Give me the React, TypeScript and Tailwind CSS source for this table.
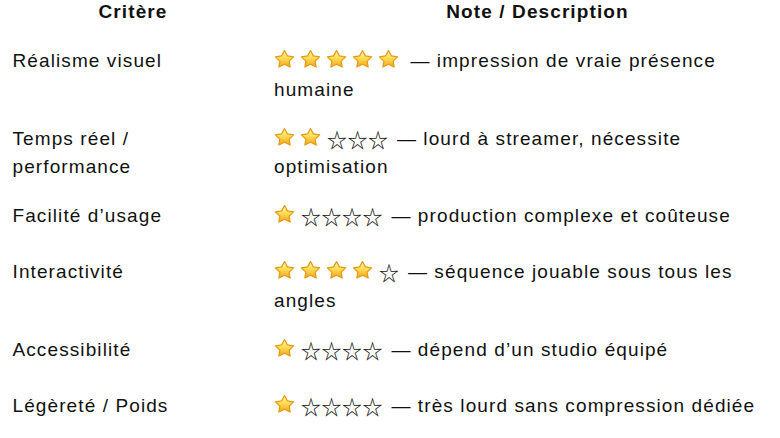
import React from "react";

type Row = { label: string; gold: number; empty: number; text: string };

const rows: Row[] = [
  { label: "Réalisme visuel", gold: 5, empty: 0, text: "— impression de vraie présence humaine" },
  { label: "Temps réel / performance", gold: 2, empty: 3, text: "— lourd à streamer, nécessite optimisation" },
  { label: "Facilité d’usage", gold: 1, empty: 4, text: "— production complexe et coûteuse" },
  { label: "Interactivité", gold: 4, empty: 1, text: "— séquence jouable sous tous les angles" },
  { label: "Accessibilité", gold: 1, empty: 4, text: "— dépend d’un studio équipé" },
  { label: "Légèreté / Poids", gold: 1, empty: 4, text: "— très lourd sans compression dédiée" },
];

function GoldStar({ id }: { id: string }) {
  return (
    <span className="inline-block w-[26px] h-[20px] align-[-2px] tracking-normal">
      <svg width="21" height="20" viewBox="0 0 24 24" preserveAspectRatio="none" className="block">
        <defs>
          <linearGradient id={id} x1="0" y1="0" x2="0" y2="1">
            <stop offset="0" stopColor="#FFF6B0" />
            <stop offset="0.45" stopColor="#FFDD55" />
            <stop offset="1" stopColor="#F4A21C" />
          </linearGradient>
        </defs>
        <path
          d="M12 1.9 L15.29 8.27 L22.46 9.4 L17.33 14.53 L18.47 21.7 L12 18.4 L5.53 21.7 L6.67 14.53 L1.54 9.4 L8.71 8.27 Z"
          fill={`url(#${id})`}
          stroke="#E49B14"
          strokeWidth="1.4"
          strokeLinejoin="round"
        />
      </svg>
    </span>
  );
}

function EmptyStars({ n }: { n: number }) {
  if (n === 0) return null;
  return (
    <span className="inline-block h-[20px] ml-[1px] mr-[2px] text-[20px] leading-[20px] align-[-3px] tracking-[0.5px] font-['Noto_Sans_CJK_JP',sans-serif] text-[#111]">
      {"☆".repeat(n)}
    </span>
  );
}

export default function App() {
  return (
    <div className="w-[780px] h-[438px] bg-white text-[#111] text-[19px] tracking-[1.1px] font-['Liberation_Sans',Arial,sans-serif] overflow-hidden">
      <div className="grid grid-cols-[266px_543px] font-bold leading-[24px] pb-[13px]">
        <div className="text-center">Critère</div>
        <div className="text-center">Note / Description</div>
      </div>
      {rows.map((r, i) => (
        <div key={i} className="grid grid-cols-[266px_543px] min-h-[56px] leading-[28.5px]">
          <div className="pl-[12.5px] pr-[24px] pt-[10px] pb-[10.5px]">{r.label}</div>
          <div className="pl-[8px] pr-[30px] pt-[10px] pb-[10.5px]">
            {Array.from({ length: r.gold }).map((_, k) => (
              <GoldStar key={"g" + k} id={`g${i}_${k}`} />
            ))}
            <EmptyStars n={r.empty} />
            {" "}
            {r.text}
          </div>
        </div>
      ))}
    </div>
  );
}
